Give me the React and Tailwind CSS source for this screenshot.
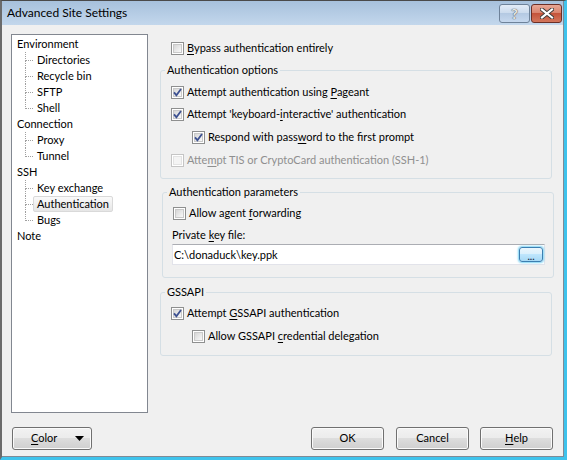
import React from "react";

const Box = ({ checked, disabled }) => (
  <span
    className={`relative flex h-[13px] w-[13px] shrink-0 border bg-white p-[1px] ${
      disabled ? "border-[#c5c5c5]" : "border-[#8e8f8f]"
    }`}
  >
    <span
      className={`flex-1 border ${
        disabled
          ? "border-[#e3e3e3] bg-[#f4f4f4]"
          : "border-[#c9c9c9] bg-[linear-gradient(135deg,#d6d6d6,#f9f9f9)]"
      }`}
    />
    {checked && (
      <svg className="absolute left-[-1px] top-[-1px]" width="13" height="13" viewBox="0 0 13 13">
        <path d="M3 6.4 L5.4 9.2 L10 3" fill="none" stroke="#3d5191" strokeWidth="1.8" />
      </svg>
    )}
  </span>
);

const Check = ({ checked, disabled, className, children }) => (
  <div className={`flex h-[16px] items-center gap-[3px] ${className}`}>
    <Box checked={checked} disabled={disabled} />
    <span className={disabled ? "text-[#8f8f8f]" : ""}>{children}</span>
  </div>
);

const U = ({ children }) => <span className="underline underline-offset-[2px]">{children}</span>;

const Group = ({ label, className, children }) => (
  <div className={`relative flex flex-col rounded-[3px] border border-[#d5dfe5] ${className}`}>
    <span className="absolute left-[4px] top-[-9px] bg-[#f0f0f0] px-[2px] leading-[16px]">{label}</span>
    {children}
  </div>
);

const TreeParent = ({ children }) => <div className="h-[16px] pl-[5px] leading-[16px]">{children}</div>;

const TreeChild = ({ last, selected, children }) => (
  <div className="flex h-[16px]">
    <div className="w-[13px]" />
    <div className="flex w-[8px] flex-col">
      <div className="h-[9px] border-b border-l border-dotted border-[#a0a0a0]" />
      <div className={`flex-1 ${last ? "" : "border-l border-dotted border-[#a0a0a0]"}`} />
    </div>
    <span
      className={`rounded-[2px] border px-[3px] leading-[14px] ${
        selected ? "border-[#d9d9d9] bg-[linear-gradient(#fafafa,#e6e6e6)]" : "border-transparent"
      }`}
    >
      {children}
    </span>
  </div>
);

const Btn = ({ className, children }) => (
  <button
    className={`flex h-[23px] items-center rounded-[3px] border border-[#707070] bg-[linear-gradient(#f2f2f2_0%,#ebebeb_50%,#dddddd_50%,#cfcfcf_100%)] shadow-[inset_0_0_0_1px_#fbfbfb] ${className}`}
  >
    {children}
  </button>
);

export default function App() {
  return (
    <div className="h-[460px] w-[567px] border-b-[3px] border-l-2 border-r-[3px] border-t border-b-[#3fc3ec] border-l-[#6b6b6b] border-r-[#3fc3ec] border-t-[#4a4a4a] font-['Lato',sans-serif] text-[11px] text-black">
      <div className="flex h-full flex-col border-b border-r border-[#7f8a96] bg-[#f0f0f0]">
        <div className="flex h-[24px] shrink-0 items-start justify-between bg-[linear-gradient(#a7c1dc,#c3d7ec)] pl-[5px] pr-[1px]">
          <span className="mt-[5px] text-[12px] leading-[14px]">Advanced Site Settings</span>
          <div className="mt-[3px] flex gap-[1px]">
            <div className="flex h-[19px] w-[31px] items-center justify-center rounded-[3px] border border-[#6e8299] bg-[linear-gradient(#e3ecf7_0%,#c9d9ec_50%,#b4c9e2_50%,#c6d8ee_100%)] text-[14px] font-bold leading-none text-[#e9e9e9] [text-shadow:0_0_1px_#4a4a4a,0_0_1px_#4a4a4a]">
              ?
            </div>
            <div className="flex h-[19px] w-[31px] items-center justify-center rounded-[3px] border border-[#6b2f26] bg-[linear-gradient(#e8a795_0%,#d8816b_50%,#c5543b_50%,#d3765c_100%)]">
              <svg width="14" height="11" viewBox="0 0 14 11">
                <path d="M2 1.5 L12 9.5 M12 1.5 L2 9.5" stroke="#3a3a3a" strokeWidth="4" strokeLinecap="square" />
                <path d="M2 1.5 L12 9.5 M12 1.5 L2 9.5" stroke="#ffffff" strokeWidth="2.2" strokeLinecap="square" />
              </svg>
            </div>
          </div>
        </div>

        <div className="flex flex-1 flex-col px-[9px] pt-[9px]">
          <div className="flex">
            <div className="flex h-[379px] w-[137px] shrink-0 flex-col border border-[#828790] bg-white pt-[1px]">
              <TreeParent>Environment</TreeParent>
              <TreeChild>Directories</TreeChild>
              <TreeChild>Recycle bin</TreeChild>
              <TreeChild>SFTP</TreeChild>
              <TreeChild last>Shell</TreeChild>
              <TreeParent>Connection</TreeParent>
              <TreeChild>Proxy</TreeChild>
              <TreeChild last>Tunnel</TreeChild>
              <TreeParent>SSH</TreeParent>
              <TreeChild>Key exchange</TreeChild>
              <TreeChild selected>Authentication</TreeChild>
              <TreeChild last>Bugs</TreeChild>
              <TreeParent>Note</TreeParent>
            </div>

            <div className="ml-[12px] flex w-[394px] flex-col">
              <Check className="mt-[6px] pl-[11px]">
                <U>B</U>ypass authentication entirely
              </Check>

              <Group label="Authentication options" className="mt-[14px] h-[109px] w-[392px]">
                <Check checked className="mt-[13px] pl-[10px]">
                  Attempt authentication using <U>P</U>ageant
                </Check>
                <Check checked className="mt-[6px] pl-[10px]">
                  Attempt 'keyboard-<U>i</U>nteractive' authentication
                </Check>
                <Check checked className="mt-[7px] pl-[31px]">
                  Respond with pass<U>w</U>ord to the first prompt
                </Check>
                <Check disabled className="mt-[7px] pl-[10px]">
                  Atte<U>m</U>pt TIS or CryptoCard authentication (SSH-1)
                </Check>
              </Group>

              <Group label="Authentication parameters" className="ml-[2px] mt-[13px] h-[86px] w-[392px]">
                <Check className="mt-[12px] pl-[10px]">
                  Allow agent <U>f</U>orwarding
                </Check>
                <div className="mt-[6px] h-[16px] pl-[9px] leading-[16px]">
                  Private <U>k</U>ey file:
                </div>
                <div className="ml-[9px] mr-[8px] mt-[1px] flex h-[21px] items-center border border-[#e2e3ea] border-t-[#abadb3] bg-white pl-[1px] pr-[1px]">
                  <span className="flex-1 leading-[16px]">{"C:\\donaduck\\key.ppk"}</span>
                  <div className="flex h-[15px] w-[24px] items-end justify-center rounded-[3px] border border-[#3c7fb1] bg-[linear-gradient(#eaf6fd_0%,#d9f0fc_50%,#bee6fd_50%,#a7d9f5_100%)] shadow-[0_0_2px_1px_#7fd4f5] text-[10px] font-bold leading-[10px] text-[#1a2f4a]">
                    ...
                  </div>
                </div>
              </Group>

              <Group label="GSSAPI" className="mt-[14px] h-[64px] w-[392px]">
                <Check checked className="mt-[12px] pl-[10px]">
                  Attempt <U>G</U>SSAPI authentication
                </Check>
                <Check className="mt-[7px] pl-[31px]">
                  Allow GSSAPI <U>c</U>redential delegation
                </Check>
              </Group>
            </div>
          </div>

          <div className="mt-[14px] flex items-center">
            <Btn className="ml-[1px] w-[80px] justify-between pl-[18px] pr-[7px]">
              <span>
                <U>C</U>olor
              </span>
              <svg width="9" height="5" viewBox="0 0 9 5">
                <path d="M0 0 H9 L4.5 5 Z" fill="#000" />
              </svg>
            </Btn>
            <div className="flex-1" />
            <Btn className="w-[73px] justify-center">OK</Btn>
            <Btn className="ml-[12px] w-[73px] justify-center">Cancel</Btn>
            <Btn className="ml-[11px] mr-[1px] w-[73px] justify-center">
              <U>H</U>elp
            </Btn>
          </div>
        </div>
      </div>
    </div>
  );
}
